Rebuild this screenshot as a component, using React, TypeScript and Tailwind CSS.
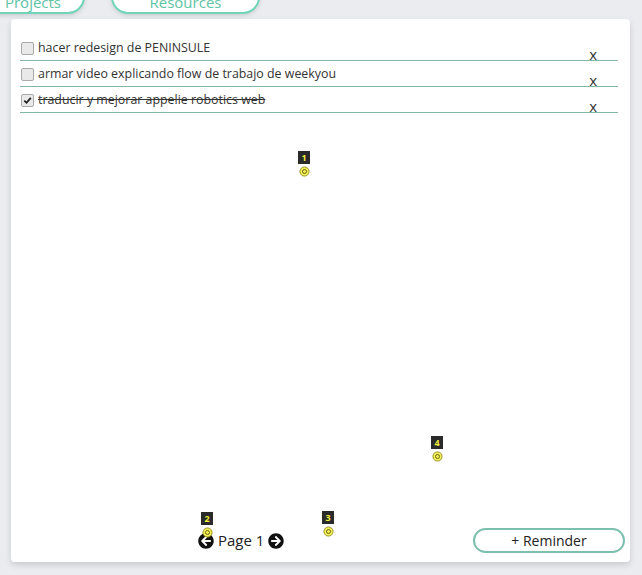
import { FaArrowCircleLeft, FaArrowCircleRight } from 'react-icons/fa';

const tasks = [
    { text: 'hacer redesign de PENINSULE', done: false },
    { text: 'armar video explicando flow de trabajo de weekyou', done: false },
    { text: 'traducir y mejorar appelie robotics web', done: true },
];

const markers = [
    { n: 1, x: 287, y: 132 },
    { n: 4, x: 420, y: 417 },
    { n: 2, x: 190, y: 493 },
    { n: 3, x: 311, y: 492 },
];

function Marker({ n, x, y }: { n: number; x: number; y: number }) {
    return (
        <div className="absolute flex flex-col items-center" style={{ left: x, top: y }}>
            <span className="flex h-[13px] w-[12px] items-center justify-center bg-[#2a2a2a] text-[9px] font-bold leading-none text-[#f2ef3a]">
                {n}
            </span>
            <svg width="11" height="11" viewBox="0 0 11 11" className="mt-[2px]">
                <circle cx="5.5" cy="5.5" r="4.6" fill="#f1ee55" stroke="#8f8c22" strokeWidth="0.9" />
                <circle cx="5.5" cy="5.5" r="2" fill="none" stroke="#6d6a18" strokeWidth="1" />
            </svg>
        </div>
    );
}

function Check({ checked }: { checked: boolean }) {
    return (
        <span className="ml-[1px] mr-[4px] flex h-[13px] w-[13px] items-center justify-center rounded-[2px] border border-[#a9a9a9] bg-[#e9e9e9]">
            {checked && (
                <svg width="9" height="9" viewBox="0 0 9 9">
                    <path d="M1.3 4.6 L3.5 6.8 L7.8 1.8" fill="none" stroke="#222" strokeWidth="1.8" />
                </svg>
            )}
        </span>
    );
}

export default function App() {
    return (
        <div className="flex h-[575px] w-full flex-col overflow-hidden bg-[#ebecf0] font-['Open_Sans',sans-serif] text-[#333]">
            <div className="-mt-[20px] flex gap-[26px]">
                <div className="-ml-[27px] flex h-[34px] w-[112px] items-end justify-center rounded-full border-2 border-[#6fd4b8] bg-white pl-[8px] text-[15px] leading-[20px] text-[#5fc3a6] shadow-[0_2px_4px_rgba(0,0,0,0.12)]">
                    Projects
                </div>
                <div className="flex h-[34px] w-[149px] items-end justify-center rounded-full border-2 border-[#6fd4b8] bg-white text-[15px] leading-[20px] text-[#5fc3a6] shadow-[0_2px_4px_rgba(0,0,0,0.12)]">
                    Resources
                </div>
            </div>

            <div className="relative mx-[11px] mt-[5px] flex h-[543px] w-[619px] flex-col rounded-[4px] bg-white shadow-[0_3px_6px_rgba(0,0,0,0.14)]">
                <ul className="ml-[9px] mr-[12px] mt-[16px]">
                    {tasks.map((t) => (
                        <li key={t.text} className="flex h-[26px] items-center border-b border-[#7fb8a8] pt-[2px]">
                            <Check checked={t.done} />
                            <span className={t.done ? 'text-[12.4px] line-through' : 'text-[12.4px]'}>{t.text}</span>
                            <span className="mb-[-2px] ml-auto mr-[21px] self-end text-[15px] leading-[15px] text-[#333]">x</span>
                        </li>
                    ))}
                </ul>

                {markers.map((m) => (
                    <Marker key={m.n} {...m} />
                ))}

                <div className="mt-auto mb-[9px] flex items-center">
                    <div className="ml-[187px] flex items-center gap-[4px] text-[15px] text-[#222]">
                        <FaArrowCircleLeft className="h-[16px] w-[16px] text-[#111]" />
                        <span>Page 1</span>
                        <FaArrowCircleRight className="h-[16px] w-[16px] text-[#111]" />
                    </div>
                    <button className="ml-auto mr-[5px] h-[25px] w-[152px] rounded-full border-2 border-[#7dbfae] bg-white text-[14px] text-[#222]">
                        + Reminder
                    </button>
                </div>
            </div>
        </div>
    );
}
